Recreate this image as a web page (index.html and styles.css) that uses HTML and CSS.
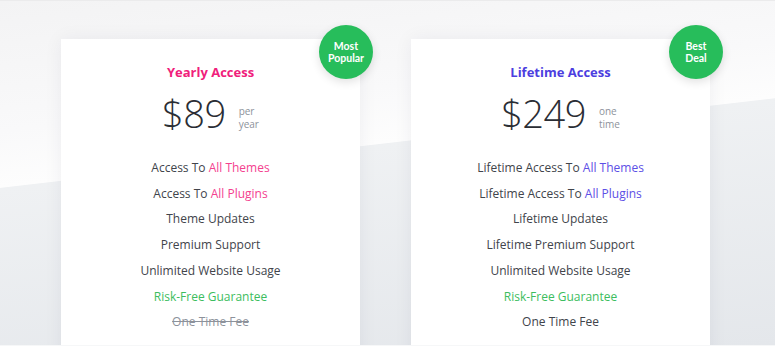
FILE: index.html
```html
<!DOCTYPE html>
<html>
<head>
<meta charset="utf-8">
<link rel="stylesheet" href="styles.css">
</head>
<body>
<div class="page">
  <div class="cards">
    <div class="card">
      <div class="badge"><span>Most</span><span>Popular</span></div>
      <h2 class="title title-pink">Yearly Access</h2>
      <div class="price">
        <span class="amount">$89</span>
        <span class="period">per<br>year</span>
      </div>
      <ul class="features">
        <li>Access To <span class="pink">All Themes</span></li>
        <li>Access To <span class="pink">All Plugins</span></li>
        <li>Theme Updates</li>
        <li>Premium Support</li>
        <li>Unlimited Website Usage</li>
        <li class="green">Risk-Free Guarantee</li>
        <li class="struck">One Time Fee</li>
      </ul>
    </div>
    <div class="card">
      <div class="badge"><span>Best</span><span>Deal</span></div>
      <h2 class="title title-blue">Lifetime Access</h2>
      <div class="price">
        <span class="amount">$249</span>
        <span class="period">one<br>time</span>
      </div>
      <ul class="features">
        <li>Lifetime Access To <span class="blue">All Themes</span></li>
        <li>Lifetime Access To <span class="blue">All Plugins</span></li>
        <li>Lifetime Updates</li>
        <li>Lifetime Premium Support</li>
        <li>Unlimited Website Usage</li>
        <li class="green">Risk-Free Guarantee</li>
        <li>One Time Fee</li>
      </ul>
    </div>
  </div>
</div>
</body>
</html>
```
FILE: styles.css
```css
* { box-sizing: border-box; }
html, body { margin: 0; padding: 0; }
body {
  width: 775px;
  height: 346px;
  overflow: hidden;
  font-family: "Open Sans", "Noto Sans", sans-serif;
}
.page {
  width: 775px;
  height: 346px;
  overflow: hidden;
  border-top: 1px solid #ebebec;
  border-bottom: 1px solid #f6f7f8;
  background: linear-gradient(173.4deg, #f3f3f4 0%, #f9f9fa 30%, #fdfdfd 43%, #eff1f3 43.2%, #e4e7eb 100%);
}
.cards {
  display: flex;
  gap: 51px;
  padding-left: 61px;
  padding-top: 38px;
}
.card {
  position: relative;
  width: 299px;
  height: 330px;
  background: #fff;
  box-shadow: 0 0 18px rgba(30, 40, 60, 0.06);
  padding-top: 23px;
  text-align: center;
}
.badge {
  position: absolute;
  left: 258px;
  top: -14px;
  width: 54px;
  height: 54px;
  border-radius: 50%;
  background: #27bd5b;
  color: #fff;
  font-family: "Lato", "Open Sans", sans-serif;
  font-weight: 700;
  font-size: 10.5px;
  line-height: 12.5px;
  display: flex;
  flex-direction: column;
  align-items: center;
  justify-content: center;
  text-align: center;
  box-shadow: 0 3px 10px rgba(0, 0, 0, 0.12);
}
.badge span { display: block; }
.title {
  margin: 0;
  font-size: 13px;
  font-weight: 700;
  line-height: 20px;
}
.title-pink { color: #f0207b; }
.title-blue { color: #4c3ee0; }
.price {
  display: flex;
  justify-content: center;
  align-items: center;
  gap: 13px;
  margin-top: 8px;
  height: 46px;
}
.amount {
  font-size: 38px;
  font-weight: 300;
  color: #2a2d34;
  letter-spacing: -0.5px;
  line-height: 46px;
}
.period {
  text-align: left;
  font-size: 10px;
  line-height: 13px;
  color: #8d929b;
  margin-top: 10px;
}
.features {
  list-style: none;
  margin: 0;
  padding: 0;
  margin-top: 19px;
  display: flex;
  flex-direction: column;
}
.features li {
  font-size: 12px;
  line-height: 25.7px;
  color: #41444b;
}
.pink { color: #f4418f; }
.blue { color: #5d4fe6; }
.features li.green { color: #3cbd5e; }
.features li.struck { color: #8d929b; text-decoration: line-through; }
```
